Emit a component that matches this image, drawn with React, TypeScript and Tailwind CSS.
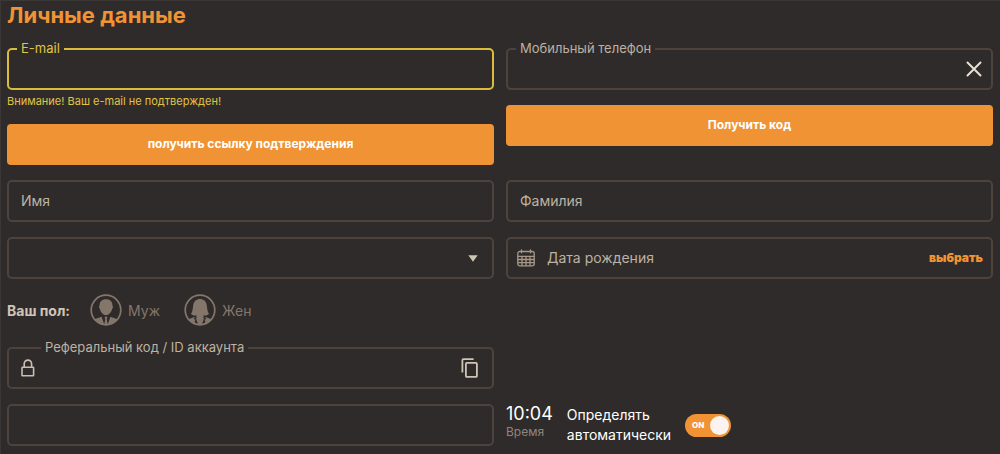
import { useState } from "react";
import type { ReactNode } from "react";
import clsx from "clsx";

type FieldProps = {
  id: string;
  label: string;
  variant?: "placeholder" | "floating" | "hidden";
  warning?: boolean;
  indent?: boolean;
  type?: string;
  before?: ReactNode;
  after?: ReactNode;
};

const Field = ({
  id,
  label,
  variant = "placeholder",
  warning,
  indent,
  type = "text",
  before,
  after,
}: FieldProps) => (
  <div
    className={clsx(
      "relative flex h-[42px] items-center rounded-[5px] border-2",
      warning ? "border-[#d9bb3d]" : "border-[#4e433c]",
    )}
  >
    {before}
    {variant === "floating" && (
      <label
        htmlFor={id}
        className={clsx(
          "absolute -top-[10px] bg-[#2f2b2a] px-1 text-[13px] leading-4",
          indent ? "left-8" : "left-2",
          warning ? "text-[#e0c443]" : "text-[#bdb2a3]",
        )}
      >
        {label}
      </label>
    )}
    <input
      id={id}
      type={type}
      aria-label={variant === "floating" ? undefined : label}
      placeholder={variant === "placeholder" ? label : undefined}
      className="h-full min-w-0 flex-1 bg-transparent px-3 pb-[2px] text-[14px] text-[#e5dccf] outline-none placeholder:text-[#bdb2a3]"
    />
    {after}
  </div>
);

const SubmitButton = ({ children }: { children: ReactNode }) => (
  <button
    type="button"
    className="flex h-[41px] w-full items-center justify-center rounded-[4px] bg-[#f09335] pb-px text-[12px] font-bold text-white"
  >
    {children}
  </button>
);

const CalendarIcon = () => (
  <svg
    viewBox="0 0 18 18"
    className="ml-[9px] h-[18px] w-[18px] shrink-0"
    fill="none"
    stroke="#a69787"
    strokeWidth="1.3"
    strokeLinecap="round"
    aria-hidden="true"
  >
    <rect x="0.8" y="2.5" width="16.4" height="14.3" rx="2" />
    <path d="M4.5 0.8v3M13.5 0.8v3M1 7.3h16M1 10.5h16M1 13.7h16M5 7.3v9.3M9 7.3v9.3M13 7.3v9.3" />
  </svg>
);

const LockIcon = () => (
  <svg
    viewBox="0 0 14 18"
    className="ml-3 h-[18px] w-[14px] shrink-0"
    fill="none"
    stroke="#c9beb0"
    strokeWidth="1.6"
    aria-hidden="true"
  >
    <rect x="1" y="8.2" width="11.6" height="8.6" rx="0.6" />
    <path d="M3.2 8V4.8a3.7 3.7 0 0 1 7.4 0V8" />
  </svg>
);

const CopyIcon = () => (
  <svg
    viewBox="0 0 18 20"
    className="h-5 w-[18px]"
    fill="none"
    stroke="#cfc5b6"
    strokeWidth="1.8"
    aria-hidden="true"
  >
    <rect x="4.9" y="4.9" width="11" height="14" rx="1" />
    <path d="M1.4 14.6V2.2a1 1 0 0 1 1-1H12.6" />
  </svg>
);

const ManIcon = () => (
  <svg viewBox="0 0 32 32" className="h-8 w-8" aria-hidden="true">
    <g fill="#84766b">
      <path d="M16 5.2c4.2 0 6.7 2.7 6.5 6.6.7.3.7 2.3-.4 3.2-.6 3.2-3.3 6.2-6.1 6.2s-5.5-3-6.1-6.2c-1.1-.9-1.1-2.9-.4-3.2C9.300 7.900 11.800 5.200 16 5.200z" />
      <path d="M11.600 22.800 14.400 31C10 30.600 6.400 28.400 4.200 25.300c2.200-.9 5-1.300 7.400-2.500z" />
      <path d="M20.400 22.800 17.600 31c4.400-.4 8-2.600 10.200-5.700-2.200-.9-5-1.300-7.400-2.500z" />
      <path d="m14.600 23 1.400-.5 1.400.5-.6 2.200 1 5.600h-3.600l1-5.600z" />
    </g>
    <circle cx="16" cy="16" r="14.8" fill="none" stroke="#84766b" strokeWidth="1.7" />
  </svg>
);

const WomanIcon = () => (
  <svg viewBox="0 0 32 32" className="h-8 w-8" aria-hidden="true">
    <g fill="#84766b">
      <path d="M16 5c3.5 0 6.2 2.2 6.8 6.2.4 3.3.7 6.400 2.200 8.800-1.700 1.300-3.600 1.700-5.600 1.400l-.6 1.900L16 28l-2.800-4.700-.6-1.900c-2 .3-3.900-.1-5.600-1.400 1.500-2.400 1.800-5.500 2.200-8.800C9.800 7.200 12.500 5 16 5z" />
      <path d="m12.600 21.500 3.400 6 3.400-6 .4 3.500-2 6h-3.600l-2-6z" />
      <path d="m4.600 25.300 6.400-2.500-1.300 2.400 1.900.4-1 1.800 2 3.600C9 30.200 6.400 28 4.600 25.300z" />
      <path d="M27.400 25.300 21 22.800l1.300 2.400-1.900.4 1 1.800-2 3.600c3.600-.8 6.200-3 8-5.700z" />
    </g>
    <circle cx="16" cy="16" r="14.8" fill="none" stroke="#84766b" strokeWidth="1.7" />
  </svg>
);

export default function App() {
  const [gender, setGender] = useState("");
  const [autoTime, setAutoTime] = useState(true);

  return (
    <main className="min-h-screen border-t border-l border-[#3b3736] bg-[#2f2b2a] pr-[7px] pl-[6px] font-['Inter','Liberation_Sans',sans-serif]">
      <h1 className="text-[22px] leading-7 font-bold text-[#f09335]">
        Личные данные
      </h1>

      <form className="grid grid-cols-2 gap-x-3 gap-y-[15px] pt-[19px] pb-2">
        <div>
          <Field
            id="email"
            type="email"
            label="E-mail"
            variant="floating"
            warning
          />
          <p className="pt-[3px] pb-[15px] text-[11px] leading-4 text-[#e0c443]">
            Внимание! Ваш e-mail не подтвержден!
          </p>
          <SubmitButton>получить ссылку подтверждения</SubmitButton>
        </div>
        <div className="flex flex-col gap-[15px]">
          <Field
            id="phone"
            type="tel"
            label="Мобильный телефон"
            variant="floating"
            after={
              <button type="button" aria-label="Очистить" className="mr-2 p-px">
                <svg
                  viewBox="0 0 16 16"
                  className="h-4 w-4"
                  stroke="#e8dfd2"
                  strokeWidth="2"
                  strokeLinecap="round"
                  aria-hidden="true"
                >
                  <path d="m1.500 1.500 13 13M14.500 1.500l-13 13" />
                </svg>
              </button>
            }
          />
          <SubmitButton>Получить код</SubmitButton>
        </div>

        <Field id="first-name" label="Имя" />
        <Field id="last-name" label="Фамилия" />

        <div className="relative">
          <select
            aria-label="Страна"
            className="h-[42px] w-full appearance-none rounded-[5px] border-2 border-[#4e433c] bg-transparent px-3 text-[14px] text-[#bdb2a3] outline-none"
          >
            <option value="" />
          </select>
          <svg
            viewBox="0 0 10 7"
            className="pointer-events-none absolute top-[18px] right-4 h-[7px] w-[10px]"
            fill="#cfc5b6"
            aria-hidden="true"
          >
            <path d="M0.300 0.300h9.400L5 6.800z" />
          </svg>
        </div>
        <Field
          id="birthday"
          label="Дата рождения"
          before={<CalendarIcon />}
          after={
            <button
              type="button"
              className="mr-2 text-[12px] font-black text-[#f09335]"
            >
              выбрать
            </button>
          }
        />

        <div
          role="radiogroup"
          aria-labelledby="gender-title"
          className="col-span-2 flex h-8 items-center text-[14px]"
        >
          <span id="gender-title" className="mr-5 font-bold text-[#cfc5b6]">
            Ваш пол:
          </span>
          <label className="mr-6 flex items-center gap-[6px] text-[#84766b]">
            <input
              type="radio"
              name="gender"
              className="sr-only"
              checked={gender === "male"}
              onChange={() => setGender("male")}
            />
            <ManIcon />
            Муж
          </label>
          <label className="flex items-center gap-[6px] text-[#84766b]">
            <input
              type="radio"
              name="gender"
              className="sr-only"
              checked={gender === "female"}
              onChange={() => setGender("female")}
            />
            <WomanIcon />
            Жен
          </label>
        </div>

        <div className="col-span-2 grid grid-cols-2 gap-x-3 gap-y-[15px] pt-[6px]">
          <Field
            id="referral"
            label="Реферальный код / ID аккаунта"
            variant="floating"
            indent
            before={<LockIcon />}
            after={
              <button type="button" aria-label="Копировать" className="mr-[13px]">
                <CopyIcon />
              </button>
            }
          />
          <div />

          <Field id="timezone" label="Часовой пояс" variant="hidden" />
          <div className="flex items-center">
            <div className="mr-[14px] pb-[6px]">
              <time className="block text-[18px] leading-5 text-white">10:04</time>
              <span className="block text-[12px] leading-4 text-[#8f857b]">
                Время
              </span>
            </div>
            <label
              htmlFor="auto-time"
              className="mr-[14px] text-[14px] leading-5 text-white"
            >
              Определять
              <br />
              автоматически
            </label>
            <label className="relative flex h-[23px] w-[46px] items-center rounded-full bg-[#f09335] pl-[7px] text-[8px] font-extrabold text-white">
              <input
                id="auto-time"
                type="checkbox"
                role="switch"
                aria-label="Определять автоматически"
                className="peer sr-only"
                checked={autoTime}
                onChange={(e) => setAutoTime(e.target.checked)}
              />
              {autoTime ? "ON" : "OFF"}
              <span className="absolute top-[2px] left-[2px] h-[19px] w-[19px] rounded-full bg-[#fbf3ef] peer-checked:left-[25px]" />
            </label>
          </div>
        </div>
      </form>
    </main>
  );
}
